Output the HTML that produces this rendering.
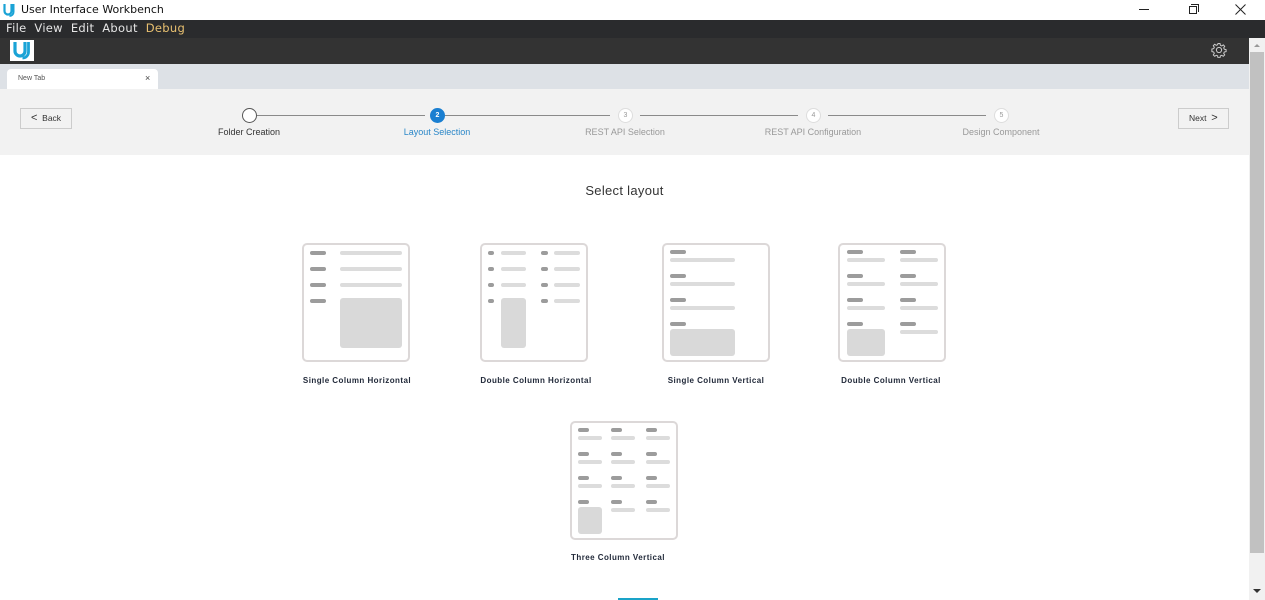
<!DOCTYPE html>
<html><head><meta charset="utf-8"><style>
*{margin:0;padding:0;box-sizing:border-box}
body{width:1265px;height:600px;overflow:hidden;position:relative;background:#fff;font-family:"Liberation Sans",Arial,sans-serif}
.a{position:absolute}
.d{position:absolute;background:#9c9c9c;height:4px;border-radius:2px}
.l{position:absolute;background:#dcdcdc;height:4px;border-radius:2px}
.b{position:absolute;background:#d9d9d9;border-radius:3px}
.card{position:absolute;width:108px;height:119px;border:2px solid #dcd8d8;border-radius:5px;background:#fff}
.lab{position:absolute;font-size:8px;font-weight:bold;color:#222a3a;width:160px;text-align:center;letter-spacing:.45px}
.circ{position:absolute;width:15px;height:15px;border-radius:50%;top:108px;font-size:7px;text-align:center;line-height:13px;color:#999;background:#fff;border:1px solid #ddd}
.ln{position:absolute;height:1px;background:#8a8a8a;top:115px}
.st{position:absolute;top:127px;font-size:9px;color:#999;width:160px;text-align:center}
.btn{position:absolute;top:108px;height:21px;border:1px solid #ccc;background:#f2f2f2;font-size:8.5px;color:#333;line-height:19px}
</style></head><body>
<div class="a" style="left:0;top:0;width:1265px;height:20px;background:#fff"></div>
<svg class="a" style="left:3px;top:3px" width="13" height="14" viewBox="0 0 13 14"><path d="M1.5 1v7a3.5 3.5 0 0 0 7 0V1" fill="none" stroke="#1aa3d6" stroke-width="2.2"/><path d="M10.5 1v8a4 4 0 0 1-4 4" fill="none" stroke="#1aa3d6" stroke-width="2"/></svg>
<div class="a" style="left:21px;top:3px;color:#111;font-family:'DejaVu Sans',sans-serif;font-size:11px">User Interface Workbench</div>
<div class="a" style="left:1139px;top:9px;width:10px;height:1px;background:#222"></div>
<div class="a" style="left:1189px;top:6px;width:8px;height:8px;border:1px solid #222"></div>
<div class="a" style="left:1191px;top:4px;width:8px;height:8px;border-top:1px solid #222;border-right:1px solid #222"></div>
<svg class="a" style="left:1235px;top:4px" width="11" height="11"><path d="M0.5 0.5L10.5 10.5M10.5 0.5L0.5 10.5" stroke="#222" stroke-width="1"/></svg>
<div class="a" style="left:0;top:20px;width:1265px;height:18px;background:#2a2b2d"></div>
<div class="a" style="left:6px;top:21px;color:#e6e6e6;font-family:'DejaVu Sans',sans-serif;font-size:11.5px;word-spacing:4px;letter-spacing:.3px">File View Edit About <span style="color:#e8c070">Debug</span></div>
<div class="a" style="left:0;top:38px;width:1249px;height:26px;background:#333"></div>
<div class="a" style="left:10px;top:40px;width:24px;height:21px;background:#fff"></div>
<svg class="a" style="left:12px;top:41px" width="20" height="19" viewBox="0 0 20 19"><path d="M3 1v9a5 5 0 0 0 10 0V1" fill="none" stroke="#1aa3d6" stroke-width="3.2"/><path d="M16.5 1v10a6 6 0 0 1-6 6" fill="none" stroke="#1aa3d6" stroke-width="2.8"/></svg>
<svg class="a" style="left:1211px;top:42px" width="16" height="16" viewBox="0 0 16 16"><circle cx="8" cy="8" r="2.6" fill="none" stroke="#ccc" stroke-width="1"/><path d="M7 1.5h2l.4 1.8 1.3.6 1.6-1 1.4 1.4-1 1.6.6 1.3 1.8.4v2l-1.8.4-.6 1.3 1 1.6-1.4 1.4-1.6-1-1.3.6-.4 1.8H7l-.4-1.8-1.3-.6-1.6 1-1.4-1.4 1-1.6-.6-1.3-1.8-.4V7l1.8-.4.6-1.3-1-1.6 1.4-1.4 1.6 1 1.3-.6z" fill="none" stroke="#ccc" stroke-width="1"/></svg>
<div class="a" style="left:1249px;top:38px;width:16px;height:562px;background:#f1f1f1"></div>
<div class="a" style="left:1250px;top:52px;width:14px;height:501px;background:#c1c1c1"></div>
<div class="a" style="left:1254px;top:44px;width:0;height:0;border-left:3px solid transparent;border-right:3px solid transparent;border-bottom:3px solid #999"></div>
<div class="a" style="left:1253px;top:589px;width:0;height:0;border-left:4px solid transparent;border-right:4px solid transparent;border-top:4px solid #333"></div>
<div class="a" style="left:0;top:64px;width:1249px;height:25px;background:#dde1e6"></div>
<div class="a" style="left:7px;top:69px;width:151px;height:20px;background:#fff;border-radius:4px 4px 0 0"></div>
<div class="a" style="left:18px;top:75px;font-size:7px;color:#555">New Tab</div>
<div class="a" style="left:145px;top:73px;font-size:9px;color:#444">×</div>
<div class="a" style="left:0;top:89px;width:1249px;height:66px;background:#f2f2f2"></div>
<div class="btn" style="left:20px;width:52px;padding-left:10px"><span style="font-size:11px">&lt;</span>&nbsp; Back</div>
<div class="btn" style="left:1178px;width:51px;padding-left:10px">Next &nbsp;<span style="font-size:11px">&gt;</span></div>
<div class="ln" style="left:257px;width:168px"></div>
<div class="ln" style="left:445px;width:165px"></div>
<div class="ln" style="left:640px;width:158px"></div>
<div class="ln" style="left:828px;width:158px"></div>
<div class="circ" style="left:242px;border:1.5px solid #555"></div>
<div class="circ" style="left:430px;background:#1a7fd1;border-color:#1a7fd1;color:#fff;font-weight:bold">2</div>
<div class="circ" style="left:618px">3</div>
<div class="circ" style="left:806px">4</div>
<div class="circ" style="left:994px">5</div>
<div class="st" style="left:169px;color:#333">Folder Creation</div>
<div class="st" style="left:357px;color:#2b87c8">Layout Selection</div>
<div class="st" style="left:545px">REST API Selection</div>
<div class="st" style="left:733px">REST API Configuration</div>
<div class="st" style="left:921px">Design Component</div>
<div class="a" style="left:0;top:183px;width:1249px;text-align:center;font-size:13px;color:#333;letter-spacing:.3px">Select layout</div>

<div class="card" style="left:302px;top:243px"></div>
<div class="d" style="left:310px;top:251px;width:16px"></div><div class="d" style="left:310px;top:267px;width:16px"></div><div class="d" style="left:310px;top:283px;width:16px"></div><div class="d" style="left:310px;top:299px;width:16px"></div>
<div class="l" style="left:340px;top:251px;width:62px"></div><div class="l" style="left:340px;top:267px;width:62px"></div><div class="l" style="left:340px;top:283px;width:62px"></div>
<div class="b" style="left:340px;top:298px;width:62px;height:50px"></div>
<div class="lab" style="left:277px;top:376px">Single Column Horizontal</div>

<div class="card" style="left:480px;top:243px"></div>
<div class="d" style="left:488px;top:251px;width:6px"></div><div class="d" style="left:488px;top:267px;width:6px"></div><div class="d" style="left:488px;top:283px;width:6px"></div><div class="d" style="left:488px;top:299px;width:6px"></div>
<div class="l" style="left:501px;top:251px;width:25px"></div><div class="l" style="left:501px;top:267px;width:25px"></div><div class="l" style="left:501px;top:283px;width:25px"></div>
<div class="b" style="left:501px;top:298px;width:25px;height:50px"></div>
<div class="d" style="left:541px;top:251px;width:7px"></div><div class="d" style="left:541px;top:267px;width:7px"></div><div class="d" style="left:541px;top:283px;width:7px"></div><div class="d" style="left:541px;top:299px;width:7px"></div>
<div class="l" style="left:554px;top:251px;width:26px"></div><div class="l" style="left:554px;top:267px;width:26px"></div><div class="l" style="left:554px;top:283px;width:26px"></div><div class="l" style="left:554px;top:299px;width:26px"></div>
<div class="lab" style="left:456px;top:376px">Double Column Horizontal</div>

<div class="card" style="left:662px;top:243px"></div>
<div class="d" style="left:670px;top:250px;width:16px"></div><div class="d" style="left:670px;top:274px;width:16px"></div><div class="d" style="left:670px;top:298px;width:16px"></div><div class="d" style="left:670px;top:322px;width:16px"></div>
<div class="l" style="left:670px;top:258px;width:65px"></div><div class="l" style="left:670px;top:282px;width:65px"></div><div class="l" style="left:670px;top:306px;width:65px"></div>
<div class="b" style="left:670px;top:329px;width:65px;height:27px"></div>
<div class="lab" style="left:636px;top:376px">Single Column Vertical</div>

<div class="card" style="left:838px;top:243px"></div>
<div class="d" style="left:847px;top:250px;width:16px"></div><div class="d" style="left:847px;top:274px;width:16px"></div><div class="d" style="left:847px;top:298px;width:16px"></div><div class="d" style="left:847px;top:322px;width:16px"></div>
<div class="l" style="left:847px;top:258px;width:38px"></div><div class="l" style="left:847px;top:282px;width:38px"></div><div class="l" style="left:847px;top:306px;width:38px"></div>
<div class="b" style="left:847px;top:329px;width:38px;height:27px"></div>
<div class="d" style="left:900px;top:250px;width:16px"></div><div class="d" style="left:900px;top:274px;width:16px"></div><div class="d" style="left:900px;top:298px;width:16px"></div><div class="d" style="left:900px;top:322px;width:16px"></div>
<div class="l" style="left:900px;top:258px;width:38px"></div><div class="l" style="left:900px;top:282px;width:38px"></div><div class="l" style="left:900px;top:306px;width:38px"></div><div class="l" style="left:900px;top:330px;width:38px"></div>
<div class="lab" style="left:811px;top:376px">Double Column Vertical</div>

<div class="card" style="left:570px;top:421px"></div>
<div class="d" style="left:578px;top:428px;width:11px"></div><div class="d" style="left:578px;top:452px;width:11px"></div><div class="d" style="left:578px;top:476px;width:11px"></div><div class="d" style="left:578px;top:500px;width:11px"></div>
<div class="l" style="left:578px;top:436px;width:24px"></div><div class="l" style="left:578px;top:460px;width:24px"></div><div class="l" style="left:578px;top:484px;width:24px"></div>
<div class="b" style="left:578px;top:507px;width:24px;height:27px"></div>
<div class="d" style="left:611px;top:428px;width:11px"></div><div class="d" style="left:611px;top:452px;width:11px"></div><div class="d" style="left:611px;top:476px;width:11px"></div><div class="d" style="left:611px;top:500px;width:11px"></div>
<div class="l" style="left:611px;top:436px;width:24px"></div><div class="l" style="left:611px;top:460px;width:24px"></div><div class="l" style="left:611px;top:484px;width:24px"></div><div class="l" style="left:611px;top:508px;width:24px"></div>
<div class="d" style="left:646px;top:428px;width:11px"></div><div class="d" style="left:646px;top:452px;width:11px"></div><div class="d" style="left:646px;top:476px;width:11px"></div><div class="d" style="left:646px;top:500px;width:11px"></div>
<div class="l" style="left:646px;top:436px;width:24px"></div><div class="l" style="left:646px;top:460px;width:24px"></div><div class="l" style="left:646px;top:484px;width:24px"></div><div class="l" style="left:646px;top:508px;width:24px"></div>
<div class="lab" style="left:538px;top:553px">Three Column Vertical</div>

<div class="a" style="left:618px;top:598px;width:40px;height:2px;background:#1aa3c8"></div>
</body></html>
